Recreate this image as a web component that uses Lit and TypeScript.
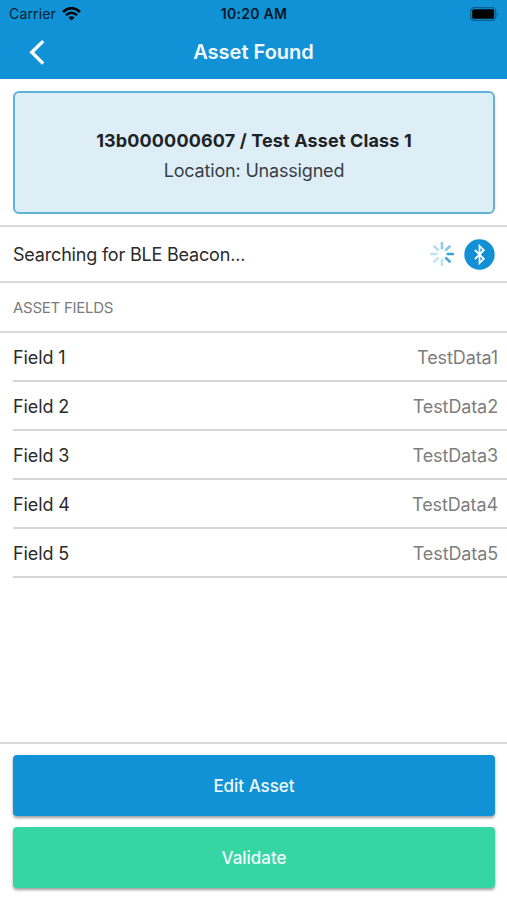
import { LitElement, html, css, svg } from "lit";
import { customElement, property } from "lit/decorators.js";

@customElement("status-bar")
class StatusBar extends LitElement {
  static styles = css`
    :host { display: grid; grid-template-columns: 1fr auto 1fr; align-items: center; height: 27px; padding: 0 8px 0 9px; color: #06202f; }
    .carrier { display: flex; align-items: center; gap: 6px; font-size: 14px; line-height: 18px; letter-spacing: 0.16px; }
    .time { font-size: 14px; font-weight: 600; line-height: 18px; letter-spacing: 0.3px; color: #031a28; }
    .battery { justify-self: end; }
    svg { display: block; }
  `;
  render() {
    return html`
      <div class="carrier">
        <span>Carrier</span>
        <svg width="19" height="14" viewBox="0 0 19 14">
          <path d="M1 5Q9.5 -2.6 18 5" fill="none" stroke="#000" stroke-width="2.6" />
          <path d="M4 8.2Q9.5 3.2 15 8.2" fill="none" stroke="#000" stroke-width="2.4" />
          <path d="M6.5 10.6Q9.5 7.8 12.5 10.6L9.5 13.6Z" fill="#000" />
        </svg>
      </div>
      <span class="time">10:20 AM</span>
      <svg class="battery" width="29" height="14" viewBox="0 0 29 14">
        <rect x=".7" y=".7" width="25" height="12.6" rx="3.6" fill="none" stroke="#0b5f8c" stroke-width="1.3" />
        <rect x="2.2" y="2.2" width="22" height="9.6" rx="1.6" fill="#000" />
        <path d="M27 4.8Q28.8 7 27 9.2Z" fill="#0b5f8c" />
      </svg>
    `;
  }
}

@customElement("nav-header")
class NavHeader extends LitElement {
  @property() heading = "";
  static styles = css`
    :host { display: grid; grid-template-columns: 60px 1fr 60px; align-items: center; height: 50px; color: #fff; }
    .back { display: block; margin-left: 28px; }
    .title { margin: 0; text-align: center; font-size: 20px; line-height: 26px; font-weight: 600; letter-spacing: 0; color: #f4fbff; }
  `;
  render() {
    return html`
      <svg class="back" width="18" height="27" viewBox="0 0 18 27">
        <path d="M15.2 2.1 3.8 13.2 15.2 24.6" fill="none" stroke="#fff" stroke-width="3.4" />
      </svg>
      <h1 class="title">${this.heading}</h1>
    `;
  }
}

@customElement("beacon-row")
class BeaconRow extends LitElement {
  static styles = css`
    :host { display: flex; align-items: center; flex: none; height: 58px; padding: 0 12px 0 13px; border-top: 2px solid #d9d9d9; border-bottom: 2px solid #d9d9d9; }
    .label { flex: 1; font-size: 18px; line-height: 24px; letter-spacing: -0.19px; padding-top: 1px; }
    .spinner { margin-right: 10px; }
    svg { display: block; }
  `;
  render() {
    const shades = [0.85, 0.8, 0.25, 0.25, 0.27, 0.3, 0.45, 0.5];
    return html`
      <span class="label">Searching for BLE Beacon...</span>
      <svg class="spinner" width="24" height="26" viewBox="-12 -13 24 26">
        ${shades.map((o, i) => svg`<path d="M5.8 0H10.8" stroke="#1290d6" stroke-width="2.7" stroke-linecap="round" opacity=${o} transform="rotate(${i * 45})" />`)}
      </svg>
      <svg width="31" height="31" viewBox="0 0 31 31">
        <circle cx="15.5" cy="15.5" r="15.2" fill="#1290d6" />
        <path d="M10.9 11 19.8 19.8 15.5 24V7L19.8 11.2 10.9 20" fill="none" stroke="#fff" stroke-width="1.8" />
      </svg>
    `;
  }
}

@customElement("app-root")
class AppRoot extends LitElement {
  static styles = css`
    * { box-sizing: border-box; }
    :host { display: flex; flex-direction: column; height: 900px; background: #fff; color: #2b2b2b; font-family: Inter, "Liberation Sans", sans-serif; }
    .top { height: 79px; background: #1292d6; flex: none; }
    .card { flex: none; height: 123px; margin: 12px 12px 11px 13px; border: 2px solid #5eb2d8; border-radius: 6px; background: #deeef6; text-align: center; padding-top: 33px; }
    .name { margin: 0; font-size: 18px; line-height: 30px; font-weight: 700; letter-spacing: 0.14px; color: #1d2327; }
    .location { margin: 0; font-size: 18px; line-height: 30px; letter-spacing: -0.18px; color: #374046; }
    .section { flex: none; margin: 0; height: 50px; padding: 0 13px; display: flex; align-items: center; font-size: 15px; font-weight: 400; letter-spacing: -0.27px; color: #7b7b7b; border-bottom: 2px solid #d9d9d9; }
    .fields { margin: 0; flex: 1; }
    .field { display: flex; justify-content: space-between; align-items: center; height: 49px; margin-left: 13px; padding: 2px 9px 0 0; border-bottom: 2px solid #d6d6d6; font-size: 18px; letter-spacing: -0.11px; }
    .value { margin: 0; color: #7d7d7d; }
    .actions { flex: none; display: flex; flex-direction: column; gap: 11px; height: 158px; padding: 11px 12px 0 13px; border-top: 2px solid #d9d9d9; }
    .btn { height: 61px; border: 0; border-radius: 4px; color: #f0fbff; font: 500 17px Inter, "Liberation Sans", sans-serif; letter-spacing: -0.02px; box-shadow: 0 2px 3px rgba(0, 0, 0, 0.38); }
    .edit { background: #1292d6; }
    .validate { background: #36d6a3; }
  `;
  render() {
    return html`
      <header class="top">
        <status-bar></status-bar>
        <nav-header heading="Asset Found"></nav-header>
      </header>
      <section class="card">
        <h2 class="name">13b000000607 / Test Asset Class 1</h2>
        <p class="location">Location: Unassigned</p>
      </section>
      <beacon-row></beacon-row>
      <h3 class="section">ASSET FIELDS</h3>
      <dl class="fields">
        ${[1, 2, 3, 4, 5].map((n) => html`<div class="field"><dt>Field ${n}</dt><dd class="value">TestData${n}</dd></div>`)}
      </dl>
      <footer class="actions">
        <button class="btn edit">Edit Asset</button>
        <button class="btn validate">Validate</button>
      </footer>
    `;
  }
}
